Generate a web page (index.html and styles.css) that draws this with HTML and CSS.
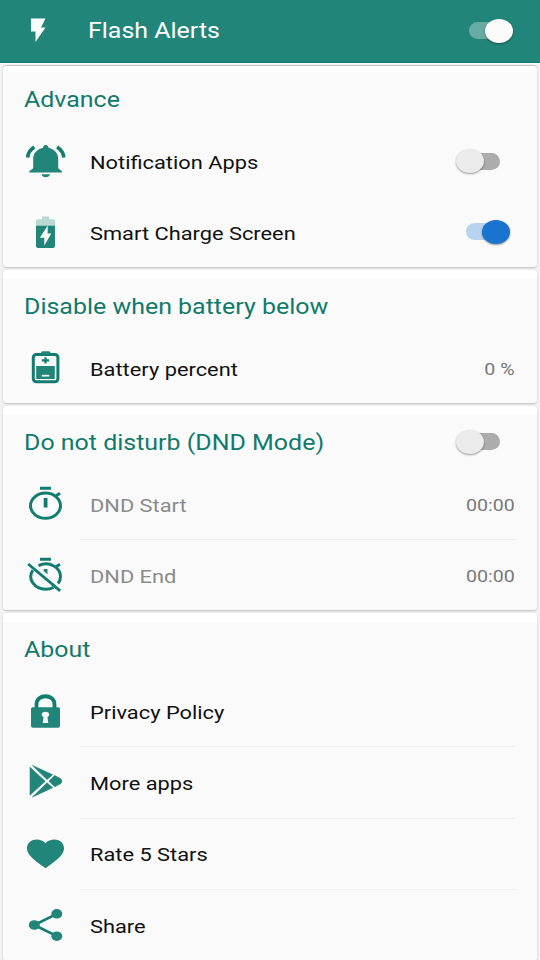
FILE: index.html
```
<!DOCTYPE html>
<html lang="en">
<head>
  <meta charset="UTF-8">
  <meta name="viewport" content="width=device-width, initial-scale=1.0">
  <title>Flash Alerts</title>
  <link rel="stylesheet" href="styles.css">
</head>
<body>
  <header class="header">
    <svg class="logo" width="16" height="25" viewBox="0 0 16 25"><path d="M1 .5H15.5L11 9.5H15.5L5.5 24V13.5H1Z"/></svg>
    <h1>Flash Alerts</h1>
    <div class="switch on light"><i></i></div>
  </header>

  <section class="card first">
    <div class="title"><h2>Advance</h2></div>
    <div class="row">
      <svg class="icon" viewBox="0 0 44 40">
        <path class="line" stroke-width="3.6" d="M4.6 15.5C5 11 7.5 7.5 11.3 5M40.8 15.5C40.4 11 37.9 7.5 34.1 5"/>
        <path d="M20 5.8C20 1.9 25.5 1.9 25.5 5.8C31.5 7.2 35.2 11.5 35.2 17V26.3L39 29.3V30.5H6.3V29.3L10.2 26.3V17C10.2 11.5 14 7.2 20 5.8ZM18.5 32.3H27C26.6 36.3 19 36.3 18.5 32.3Z"/>
      </svg>
      <div class="cell"><span class="name">Notification Apps</span><div class="switch off"><i></i></div></div>
    </div>
    <div class="row">
      <svg class="icon" viewBox="0 0 44 40">
        <path class="pale" d="M13 13V8Q13 6.3 15 6.3H19V3.6H26V6.3H30Q32 6.3 32 8V13Z"/>
        <path d="M13 12.7H32V33Q32 35 30 35H15Q13 35 13 33Z"/>
        <path class="cut" d="M24.8 12.5L16.8 24.8H21.3V32.5L28.3 20.6H24.6Z"/>
      </svg>
      <div class="cell"><span class="name">Smart Charge Screen</span><div class="switch on"><i></i></div></div>
    </div>
  </section>

  <section class="card">
    <div class="title"><h2>Disable when battery below</h2></div>
    <div class="row">
      <svg class="icon" viewBox="0 0 44 40">
        <rect class="line" stroke-width="3" x="10.3" y="6.4" width="24.6" height="27.4" rx="3"/>
        <path d="M18 5Q18 3.3 19.5 3.3H26Q27.5 3.3 27.5 5V6H18ZM13.2 18H31.8V31H13.2Z"/>
        <path class="line" stroke-width="2.2" d="M18.8 12.4H26.2M22.5 9.2V15.6"/>
        <path class="gap" stroke-width="1.7" d="M18.8 27.7H26.3"/>
      </svg>
      <div class="cell"><span class="name">Battery percent</span><span class="value">0 %</span></div>
    </div>
  </section>

  <section class="card">
    <div class="title"><h2>Do not disturb (DND Mode)</h2><div class="switch off"><i></i></div></div>
    <div class="row muted">
      <svg class="icon" viewBox="0 0 44 40">
        <ellipse class="line" stroke-width="3" cx="22.5" cy="20.7" rx="15" ry="12.6"/>
        <path class="line" stroke-width="3" d="M17 3.2H28M33 10.8L37 8.2"/>
        <path class="line" stroke-width="3.8" d="M22.6 13V22.5"/>
      </svg>
      <div class="cell divided"><span class="name">DND Start</span><span class="value">00:00</span></div>
    </div>
    <div class="row muted">
      <svg class="icon" viewBox="0 0 44 40">
        <path class="line" stroke-width="3" d="M15.5 9.6C27 4.5 37.5 12 37.5 20.7Q37.5 24.5 35 27.5M9.7 14.2C4 23.5 12 33.3 22.5 33.3Q27 33.3 30.5 31.5"/>
        <path class="line" stroke-width="3" d="M17 3.2H28M33 10.8L37 8.2"/>
        <path d="M20.7 13H24.5V18.3L20.7 15.2Z"/>
        <path class="line" stroke-width="2.9" d="M5.2 8L37.2 34.8"/>
      </svg>
      <div class="cell"><span class="name">DND End</span><span class="value">00:00</span></div>
    </div>
  </section>

  <section class="card about">
    <div class="title"><h2>About</h2></div>
    <div class="row">
      <svg class="icon" viewBox="0 0 44 40">
        <path class="line" stroke-width="3.8" d="M13.5 17V12.5C13.5 1.5 31.5 1.5 31.5 12.5V17"/>
        <rect x="8" y="15.2" width="29" height="20.6" rx="1.8"/>
        <path class="cut" d="M20.6 25.2C17 22.6 19.2 19.8 22.5 19.8S28 22.6 24.4 25.2L25.3 31H19.7Z"/>
      </svg>
      <div class="cell divided"><span class="name">Privacy Policy</span></div>
    </div>
    <div class="row">
      <svg class="icon" viewBox="0 0 44 40">
        <path class="round" d="M7 4.2L22.2 18.2L7 32.2ZM9.5 2.4L29.7 11.7L24 16.6ZM31.7 12.6L37.5 15.6Q40.5 18.2 37.5 20.8L31.7 23.8L25.9 18.2ZM29.7 24.7L9.5 34L24 19.8Z"/>
      </svg>
      <div class="cell divided"><span class="name">More apps</span></div>
    </div>
    <div class="row">
      <svg class="icon" viewBox="0 0 44 40">
        <path d="M22.5 33.2L18 29.9C9.5 23.5 4 19.5 4 13.2C4 3.5 17 2 22.5 8.2C28 2 41 3.5 41 13.2C41 19.5 35.5 23.5 27 29.9Z"/>
      </svg>
      <div class="cell divided"><span class="name">Rate 5 Stars</span></div>
    </div>
    <div class="row">
      <svg class="icon" viewBox="0 0 44 40">
        <path class="line" stroke-width="2.6" d="M33.8 7.8L11.3 19L33.8 30.2"/>
        <ellipse cx="33.8" cy="7.8" rx="5.5" ry="4.8"/>
        <ellipse cx="11.3" cy="19" rx="5.5" ry="4.8"/>
        <ellipse cx="33.8" cy="30.2" rx="5.5" ry="4.8"/>
      </svg>
      <div class="cell"><span class="name">Share</span></div>
    </div>
  </section>
</body>
</html>
```

FILE: styles.css
```
*{margin:0;padding:0;box-sizing:border-box;}
body{width:540px;height:960px;overflow:hidden;background:#f3f3f3;font-family:Roboto,"Liberation Sans",sans-serif;color:#111;}

.header{height:63px;background:#22857a;border-bottom:1px solid #0f766b;box-shadow:0 1px #fff;display:flex;align-items:center;padding:0 27px 1px 30px;}
.logo{fill:#fff;}
.header h1{flex:1;margin:1px 0 0 42px;color:#fff;}
h1,h2{font-size:21.9px;font-weight:400;line-height:28px;white-space:nowrap;transform:scaleX(1.14);transform-origin:left;}
h2{color:#107a6c;}

/* cards */
.card{margin:0 3px 3px;padding-top:9px;border-radius:4px;background:linear-gradient(#fff 9px,#fafafa 9px);box-shadow:0 1px 2px #bbb;}
.card.first{margin-top:2px;padding-top:6px;border-top:1px solid #c9c2c0;background:linear-gradient(#fff 6px,#fafafa 6px);}
.title{height:54px;display:flex;align-items:center;justify-content:space-between;padding:1px 37px 0 21px;}
.row{height:71px;display:flex;align-items:center;padding:0 22px 0 7px;}
.row:last-child{height:70px;}
.about .row{height:71.25px;}
.icon{width:44px;height:40px;margin:0 13px;fill:#22857a;flex:none;}
.row + .row .icon{margin-top:1px;}
.cell{flex:1;height:100%;display:flex;align-items:center;justify-content:space-between;padding:3px 0 0 10px;}
.divided{border-bottom:1px solid #f0f0f0;}
.name{font-size:19.15px;line-height:26px;white-space:nowrap;transform:scaleX(1.14);transform-origin:left;}
.value{margin-bottom:2px;font-size:17.2px;line-height:24px;color:#777;transform:scaleX(1.14);transform-origin:right;}
.muted .name{color:#8b8b8b;}

/* icons */
.line{fill:none;stroke:#117c70;}
.gap{fill:none;stroke:#fafafa;}
.cut{fill:#fafafa;}
.pale{fill:#b9d7d3;}
.round{stroke:#22857a;stroke-width:.6;stroke-linejoin:round;}

/* switches */
.switch{width:44px;height:17px;border-radius:9px;display:flex;align-items:center;flex:none;}
.switch i{width:28px;height:24px;border-radius:50%;box-shadow:0 1px 2px rgba(0,0,0,.4);}
.off{background:linear-gradient(90deg,transparent 14px,#acacac 14px);}
.off i{background:#ebebeb;}
.title .off{margin-bottom:2px;}
.cell .off{margin:0 15px 4px 0;}
.on{background:#b8d3ef;justify-content:flex-end;}
.on i{background:#1a73ce;}
.cell .on{margin:0 5px 4px 0;}
.light{background:#68aba3;}
.light i{background:#fafafa;}
```
